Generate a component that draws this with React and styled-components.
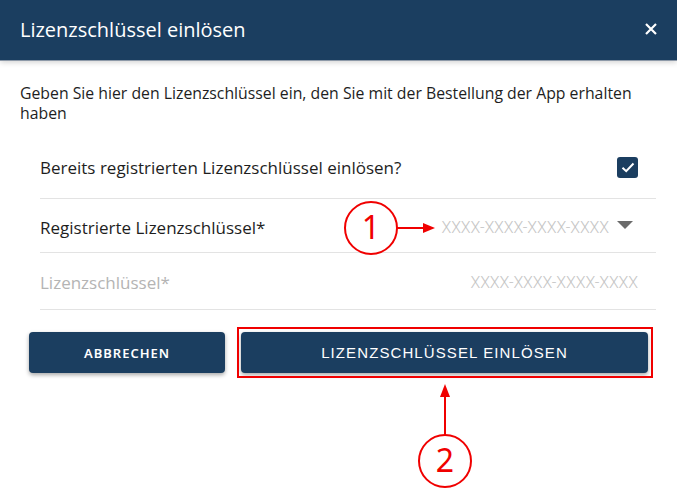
import React from 'react'
import styled, { createGlobalStyle } from 'styled-components'

const navy = '#1b3e60'
const red = '#f00000'

const GlobalStyle = createGlobalStyle`
    html, body {
        margin: 0;
        padding: 0;
        background: #fff;
    }
    * {
        box-sizing: border-box;
    }
`

const Dialog = styled.div`
    position: relative;
    width: 677px;
    height: 495px;
    background: #fff;
    font-family: 'Open Sans', sans-serif;
    color: #1e1e1e;
    overflow: hidden;
`

const Header = styled.header`
    height: 60px;
    background: ${navy};
    display: flex;
    align-items: center;
    justify-content: space-between;
    padding: 0 20px 2px 20px;
    box-shadow: 0 1px 0 #8d99a8, 0 2px 6px rgba(0, 0, 0, 0.2);
    position: relative;
    z-index: 1;
`

const Title = styled.h1`
    margin: 0;
    font-size: 20px;
    font-weight: 400;
    color: #fff;
`

const Close = styled.button`
    border: none;
    background: none;
    padding: 0;
    display: flex;
    color: #fff;
    cursor: pointer;
`

const Body = styled.div`
    padding: 23px 20px 0 20px;
`

const Intro = styled.p`
    margin: 0;
    font-size: 15.8px;
    line-height: 20px;
`

const Form = styled.div`
    margin: 18px 1px 0 20px;
`

const Row = styled.div`
    height: ${(p) => p.$h}px;
    display: flex;
    align-items: center;
    justify-content: space-between;
    border-bottom: 1px solid #e3e3e3;
    padding: ${(p) => (p.$first ? '0 18px 4px 0' : `3px ${p.$pr || 18}px 0 0`)};
`

const Label = styled.span`
    font-size: 17px;
    color: ${(p) => (p.$muted ? '#b4b4b4' : '#1e1e1e')};
`

const Check = styled.span`
    width: 21px;
    height: 21px;
    border-radius: 3px;
    background: ${navy};
    display: flex;
    align-items: center;
    justify-content: center;
`

const Select = styled.div`
    display: flex;
    align-items: center;
    gap: 8px;
`

const Placeholder = styled.span`
    font-family: Roboto, sans-serif;
    font-weight: 300;
    font-size: 16px;
    color: #c6c6c6;
    letter-spacing: -0.1px;
`

const Caret = styled.span`
    width: 0;
    height: 0;
    margin-bottom: 5px;
    border-left: 8.5px solid transparent;
    border-right: 8.5px solid transparent;
    border-top: 8px solid #6b6b6b;
`

const Actions = styled.div`
    display: flex;
    gap: 16px;
    padding: 22px 29px 0 29px;
`

const Button = styled.button`
    position: relative;
    height: 41px;
    flex: ${(p) => (p.$wide ? 1 : '0 0 196px')};
    border: none;
    border-radius: 4px;
    background: ${navy};
    color: #fff;
    box-shadow: 0 2px 4px rgba(0, 0, 0, 0.35);
    font-family: ${(p) => (p.$wide ? "'Liberation Sans', Arial, sans-serif" : "'Noto Sans', sans-serif")};
    font-size: ${(p) => (p.$wide ? 15 : 13)}px;
    font-weight: ${(p) => (p.$wide ? 400 : 600)};
    letter-spacing: ${(p) => (p.$wide ? 1.1 : 1)}px;
    text-transform: uppercase;
    cursor: pointer;

    &::after {
        content: '';
        display: ${(p) => (p.$marked ? 'block' : 'none')};
        position: absolute;
        inset: -5px -5px -5px -4px;
        border: 2px solid ${red};
    }
`

const Marker = styled.div`
    position: absolute;
    left: ${(p) => p.$x - 27}px;
    top: ${(p) => p.$y - 27}px;
    width: 54px;
    height: 54px;
    border: 2px solid ${red};
    border-radius: 50%;
    display: flex;
    align-items: center;
    justify-content: center;
    color: ${red};
    font-family: 'Noto Sans', sans-serif;
    font-size: 32px;
    line-height: 1;
    padding-bottom: 2px;
    background: #fff;
`

const Arrow = styled.svg`
    position: absolute;
    overflow: visible;
`

export default function App() {
    return (
        <>
            <GlobalStyle />
            <Dialog>
                <Header>
                    <Title>Lizenzschlüssel einlösen</Title>
                    <Close aria-label="Schließen">
                        <svg width="12" height="12" viewBox="0 0 12 12">
                            <path d="M1 1 L11 11 M11 1 L1 11" stroke="#fff" strokeWidth="2.2" />
                        </svg>
                    </Close>
                </Header>
                <Body>
                    <Intro>
                        Geben Sie hier den Lizenzschlüssel ein, den Sie mit der Bestellung der App erhalten
                        haben
                    </Intro>
                    <Form>
                        <Row $h={58} $first>
                            <Label>Bereits registrierten Lizenzschlüssel einlösen?</Label>
                            <Check>
                                <svg width="14" height="11" viewBox="0 0 14 11">
                                    <path d="M1.5 5.8 L5.2 9.2 L12.5 1.5" fill="none" stroke="#fff" strokeWidth="2" />
                                </svg>
                            </Check>
                        </Row>
                        <Row $h={54} $pr={23}>
                            <Label>Registrierte Lizenzschlüssel*</Label>
                            <Select>
                                <Placeholder>XXXX-XXXX-XXXX-XXXX</Placeholder>
                                <Caret />
                            </Select>
                        </Row>
                        <Row $h={57}>
                            <Label $muted>Lizenzschlüssel*</Label>
                            <Placeholder>XXXX-XXXX-XXXX-XXXX</Placeholder>
                        </Row>
                    </Form>
                </Body>
                <Actions>
                    <Button>Abbrechen</Button>
                    <Button $wide $marked>Lizenzschlüssel einlösen</Button>
                </Actions>

                <Marker $x={371} $y={228}>1</Marker>
                <Arrow style={{ left: 397, top: 222 }} width="40" height="12">
                    <path d="M0 6 H28" stroke={red} strokeWidth="2" />
                    <path d="M26 1 L38 6 L26 11 Z" fill={red} />
                </Arrow>

                <Arrow style={{ left: 439, top: 383 }} width="12" height="52">
                    <path d="M6 12 V52" stroke={red} strokeWidth="2" />
                    <path d="M1 14 L6 1 L11 14 Z" fill={red} />
                </Arrow>
                <Marker $x={445} $y={461}>2</Marker>
            </Dialog>
        </>
    )
}
